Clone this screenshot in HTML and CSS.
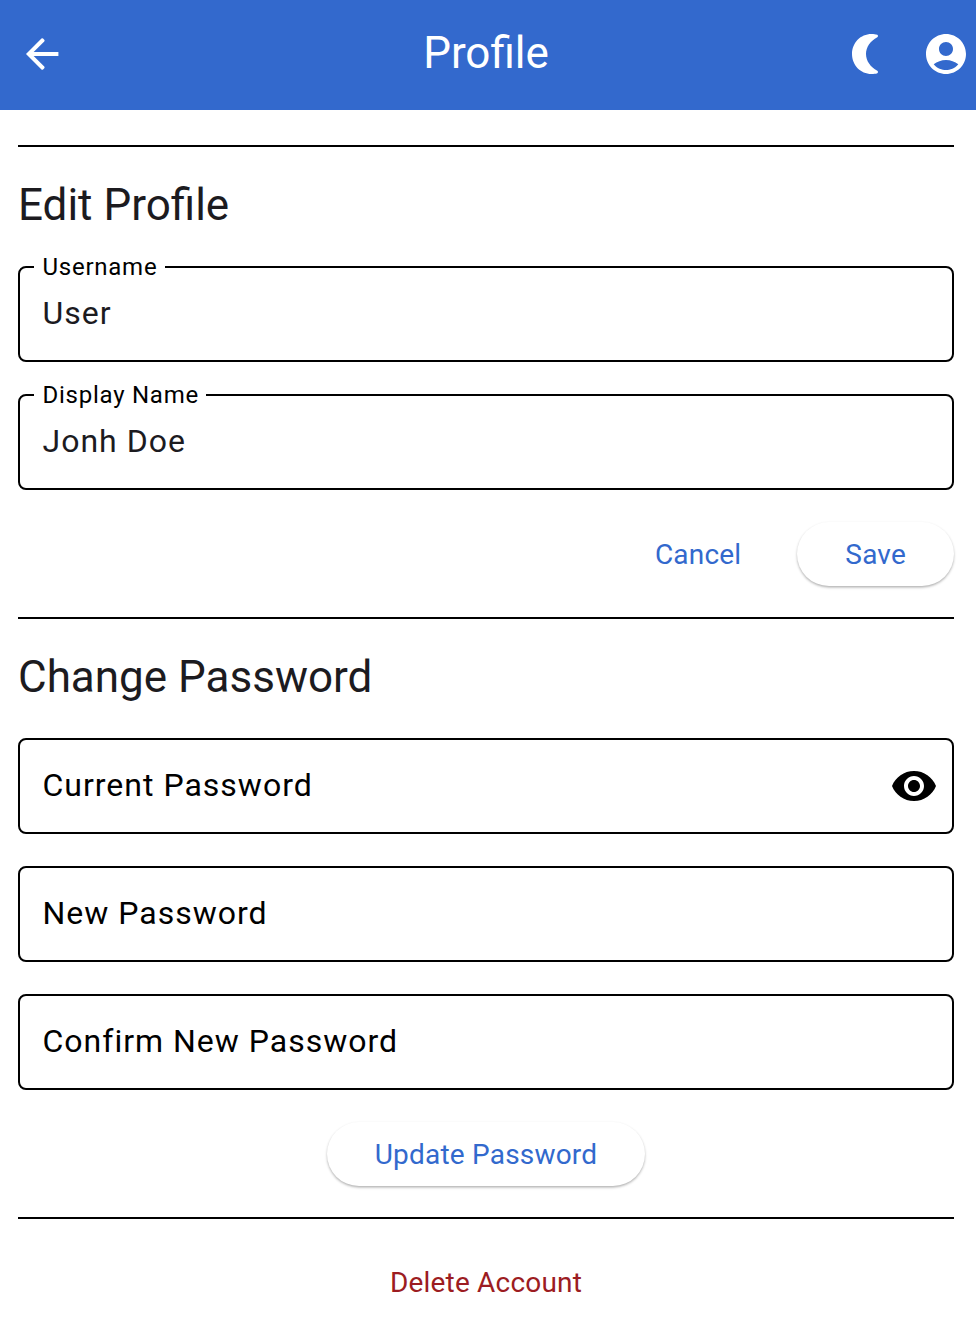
FILE: index.html
```html
<!DOCTYPE html>
<html lang="en">
<head>
<meta charset="utf-8">
<title>Profile</title>
<link rel="stylesheet" href="styles.css">
</head>
<body>
<header class="bar">
  <svg class="back" viewBox="0 0 24 24"><path d="M20.200 11H7.830l5.300-5.300q.4-.4 0-.8l-.6-.6q-.4-.4-.8 0L4 12l7.730 7.700q.4.4.8 0l.6-.6q.4-.4 0-.8L7.830 13H20.200z"/></svg>
  <h1 class="bar-title">Profile</h1>
  <div class="actions">
    <svg class="moon" viewBox="0 0 28 40"><path d="M19.500 0C8.500 0 0 8.800 0 20s8.500 20 19.500 20c2.200 0 4.200-.2 5.800-.8.900-.5.900-1.900 0-2.500C18.500 33 14 27 14 20S18.500 7 25.300 3.300c.9-.6.9-2 0-2.500C23.700.2 21.700 0 19.500 0z"/></svg>
    <svg class="account" viewBox="2 2 20 20"><path d="M12 2C6.480 2 2 6.480 2 12s4.480 10 10 10 10-4.480 10-10S17.520 2 12 2zm0 4c1.930 0 3.500 1.570 3.500 3.500S13.930 13 12 13s-3.500-1.570-3.500-3.500S10.070 6 12 6zm0 14c-2.030 0-4.430-.82-6.140-2.880C7.550 15.800 9.680 15 12 15s4.450.8 6.140 2.120C16.430 19.180 14.030 20 12 20z"/></svg>
  </div>
</header>
<main class="page">
  <section class="section">
    <h2 class="heading">Edit Profile</h2>
    <fieldset class="field labelled"><legend class="label">Username</legend><div class="value">User</div></fieldset>
    <fieldset class="field labelled"><legend class="label">Display Name</legend><div class="value">Jonh Doe</div></fieldset>
    <div class="buttons"><button class="btn text">Cancel</button><button class="btn raised">Save</button></div>
  </section>
  <section class="section">
    <h2 class="heading">Change Password</h2>
    <div class="field plain"><span class="hint">Current Password</span>
      <svg class="eye" viewBox="1 4.500 22 15"><path d="M12 4.500C7 4.500 2.730 7.610 1 12c1.730 4.390 6 7.500 11 7.500s9.270-3.110 11-7.500c-1.730-4.390-6-7.500-11-7.500zM12 17c-2.760 0-5-2.240-5-5s2.240-5 5-5 5 2.240 5 5-2.240 5-5 5zm0-8c-1.660 0-3 1.340-3 3s1.340 3 3 3 3-1.340 3-3-1.340-3-3-3z"/></svg></div>
    <div class="field plain"><span class="hint">New Password</span></div>
    <div class="field plain"><span class="hint">Confirm New Password</span></div>
    <div class="buttons centered"><button class="btn raised">Update Password</button></div>
  </section>
  <section class="section last">
    <button class="btn danger">Delete Account</button>
  </section>
</main>
</body>
</html>
```

FILE: styles.css
```css
* { box-sizing: border-box; }
body { margin: 0; background: #fff; color: #1c1b1f; font-family: Roboto, sans-serif; }
svg { display: block; fill: currentColor; }
.bar { height: 110px; padding: 0 10px 2px 6px; display: grid; grid-template-columns: 1fr auto 1fr; align-items: center; background: #3369cd; color: #fff; }
.back { width: 48px; height: 48px; margin-left: 12px; }
.bar-title { margin: 0; padding-bottom: 2px; font-size: 44px; line-height: 56px; font-weight: 400; }
.actions { display: flex; justify-content: flex-end; gap: 46px; }
.moon { width: 28px; height: 40px; }
.account { width: 40px; height: 40px; }
.page { padding: 35px 22px 0 18px; }
.section { border-top: 2px solid #000; padding-top: 30px; }
.heading { margin: 0 0 33px; font-size: 44px; line-height: 56px; font-weight: 400; }
.field { height: 96px; margin: 0 0 32px; border: 2px solid #000; border-radius: 8px; font-size: 32px; letter-spacing: 1px; }
.labelled { height: 107px; margin-top: -11px; padding: 0 22px 0 14px; }
.label { padding: 0 7.500px 0 8.500px; font-size: 24px; line-height: 24px; letter-spacing: .75px; color: #000; }
.value { padding: 14px 8.500px 0; line-height: 40px; }
.plain { display: flex; align-items: center; justify-content: space-between; padding: 0 16px 0 22.500px; color: #000; }
.hint { padding-bottom: 2px; }
.eye { width: 44px; height: 30px; }
.buttons { display: flex; justify-content: flex-end; gap: 8px; margin-bottom: 31px; }
.centered { justify-content: center; }
.btn { height: 64px; padding: 1px 48px 0; border: 0; border-radius: 32px; background: transparent; color: #3269cd; font: 400 28px/40px Roboto, sans-serif; letter-spacing: .2px; }
.raised { background: #fff; box-shadow: 0 1.500px 2.500px rgba(0,0,0,.3); }
.danger { color: #9c1c22; }
.last { display: flex; justify-content: center; padding-top: 31px; }
```
